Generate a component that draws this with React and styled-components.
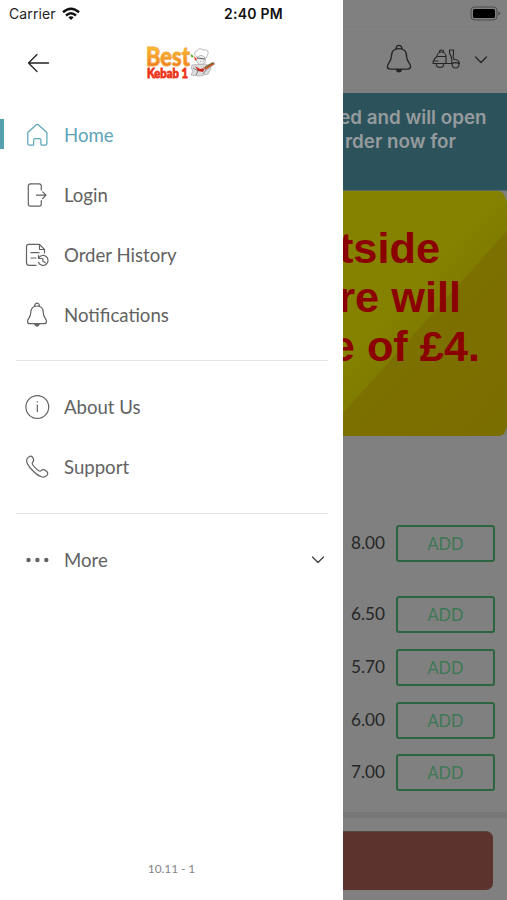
import React from "react";
import styled, { createGlobalStyle } from "styled-components";

const GlobalStyle = createGlobalStyle`
  * { box-sizing: border-box; }
  body { margin: 0; background: #fff; overflow: hidden; }
`;

const Screen = styled.div`
  display: grid;
  grid-template-columns: 343px 164px;
  width: 507px;
  height: 900px;
  overflow: hidden;
  font-family: Lato, sans-serif;
`;

const Drawer = styled.aside`
  display: flex;
  flex-direction: column;
  height: 900px;
  background: #fff;
`;

const StatusBar = styled.div`
  display: flex;
  align-items: center;
  height: 27px;
  padding-left: 9px;
  font-family: Inter, sans-serif;
  font-size: 14px;
  line-height: 27px;
  color: #222;
  white-space: nowrap;
`;

const Carrier = styled.span`
  width: 53px;
  letter-spacing: 0.1px;
`;

const Clock = styled.span`
  margin-left: 144px;
  font-weight: 600;
  font-size: 14px;
  letter-spacing: 0.25px;
  color: #111;
`;

const DrawerHeader = styled.header`
  display: flex;
  align-items: center;
  height: 73px;
  padding: 0 0 1px 27px;
`;

const LogoSvg = styled.svg`
  display: block;
  margin-left: 95px;
`;

const Group = styled.nav`
  padding-top: ${(p) => p.$top}px;
`;

const Item = styled.a`
  display: flex;
  align-items: center;
  height: 60px;
  padding-right: 18px;
  color: ${(p) => (p.$active ? "#5ba4b8" : "#626262")};
`;

const Marker = styled.span`
  width: 4px;
  height: 30px;
  margin: 0 20px 2px 0;
  background: ${(p) => (p.$active ? "#559fae" : "transparent")};
`;

const Label = styled.span`
  flex: 1;
  margin-left: 13px;
  font-size: 18.6px;
  line-height: 24px;
  white-space: nowrap;
`;

const Icon = styled.svg`
  display: block;
  flex: none;
  fill: none;
  stroke: currentColor;
  stroke-width: ${(p) => p.$weight || 1.2};
  stroke-linecap: round;
  stroke-linejoin: round;
`;

const Divider = styled.hr`
  width: 312px;
  height: 1px;
  margin: ${(p) => p.$top}px 0 0 16px;
  border: 0;
  background: #e6e6e6;
`;

const Version = styled.footer`
  margin-top: auto;
  padding-bottom: 22px;
  text-align: center;
  font-size: 12px;
  letter-spacing: -0.1px;
  line-height: 18px;
  color: #858585;
`;

const Page = styled.main`
  display: flex;
  flex-direction: column;
  height: 900px;
  overflow: hidden;
  background: #808080;
  color: #262626;
`;

const BatteryBar = styled.div`
  display: flex;
  justify-content: flex-end;
  align-items: center;
  height: 27px;
  padding-right: 6px;
  border-bottom: 1px solid #7d7d7d;
`;

const Toolbar = styled.div`
  display: flex;
  align-items: center;
  height: 66px;
  padding: 0 0 3px 42px;
`;

const ToolbarIcon = styled(Icon)`
  margin-right: ${(p) => p.$gap}px;
`;

const Notice = styled.section`
  display: flex;
  flex-direction: column;
  align-items: flex-end;
  height: 98px;
  padding-top: 13px;
  border-bottom: 1px solid #58696c;
  background: #2c535c;
  color: #979b9d;
  font-family: Inter, sans-serif;
  font-size: 18.8px;
  font-weight: 600;
  line-height: 23.5px;
`;

const NoticeLine = styled.span`
  margin-right: ${(p) => p.$end}px;
  white-space: nowrap;
`;

const Promo = styled.section`
  display: flex;
  flex-direction: column;
  align-items: flex-end;
  height: 245px;
  padding-top: 33px;
  clip-path: polygon(0 0, 156px 0, 160px 2px, 164px 10px, 164px 236px, 161px 243px, 157px 245px, 0 245px);
  background: linear-gradient(132deg, #858200 0 40%, #807c00 51.8%, #7c7000 52.2%, #7b6e00 100%);
  color: #8b0000;
  font-family: "Liberation Sans", sans-serif;
  font-size: 43.3px;
  font-weight: 700;
  line-height: 49.2px;
`;

const PromoLine = styled.span`
  margin-right: ${(p) => p.$end}px;
  white-space: nowrap;
`;

const Products = styled.section`
  display: flex;
  flex-direction: column;
  padding-top: 89px;
`;

const Product = styled.div`
  display: flex;
  align-items: center;
  justify-content: flex-end;
  height: 37px;
  margin-bottom: ${(p) => p.$gap}px;
  padding-right: 12px;
`;

const Price = styled.span`
  width: 45px;
  padding-bottom: 2px;
  font-size: 17.2px;
  line-height: 22px;
`;

const AddButton = styled.button`
  flex: none;
  width: 99px;
  height: 37px;
  padding: 0;
  border: 2px solid #2c653f;
  border-radius: 3px;
  background: transparent;
  color: #3d7855;
  font: 16.3px Lato, sans-serif;
`;

const Checkout = styled.div`
  flex: 1;
  border-top: 6px solid #777;
  padding-top: 13px;
`;

const CheckoutButton = styled.div`
  width: 149.5px;
  height: 59px;
  border-top: 1px solid #594540;
  border-radius: 0 7px 7px 0;
  background: #5d342d;
`;

const icons = {
  home: <path d="M3.800 10.500 12.300 2.800q1-.8 2 0l8.600 7.700v11q0 1.700-1.700 1.700h-3.300q-1 0-1-1v-4q0-1.500-1.500-1.500h-4.200q-1.500 0-1.500 1.500v4q0 1-1 1H5.500q-1.700 0-1.700-1.700Z" />,
  login: <><path d="M17.3 8V4q0-2.2-2.2-2.2H6.5Q4.3 1.800 4.3 4v18q0 2.200 2.200 2.200h8.600q2.200 0 2.200-2.200v-3.500" /><path d="M12.500 13.200H22M18.700 9.900 22 13.200l-3.300 3.300" /></>,
  history: <><path d="M20.500 11V7.500L15.500 2.300H4.800Q2.500 2.300 2.500 4.600v16q0 2.800 2.800 2.800H12M15.500 2.300V7.500h5M7 10.700h8M7 16h5" /><path d="M14.800 15.800a5 5 0 1 1-.3 4.700M14.500 13.500v3h3M18.800 16.300v2.700l2.500 1.800" /></>,
  bell: <><path d="M10.700 4.500v-1a2.300 2.300 0 0 1 4.600 0v1M13 4C8.500 4 6.700 7.100 6.700 11c0 4.500-3.200 5.400-3.200 8.400 0 1.700 1 2.300 2.500 2.300h14c1.500 0 2.500-.6 2.500-2.300 0-3-3.200-3.900-3.200-8.400C19.300 7.100 17.500 4 13 4Z" /><path d="M10.800 22.200h4.400q-.5 1.900-2.200 1.900t-2.200-1.900Z" fill="currentColor" /></>,
  info: <><circle cx="13.300" cy="13" r="11.400" /><path d="M13.300 11v6.500M13.300 7.700v.3" /></>,
  phone: <path d="M4 3.600c2.400-2.300 3.800-1.800 5 .3 1.400 2.200.7 3.200-.4 4.300-1.200 1.200.1 3.100 2.800 5.700 2.600 2.700 4.500 4 5.700 2.700 1.100-1.100 2.200-1.700 4.700.1 2.300 1.600 2.700 3 .8 5-2.600 2.800-7.300 1.500-13-4.200C3.400 11.800.9 6.600 4 3.600Z" />,
  more: <g fill="currentColor" stroke="none"><circle cx="4.500" cy="13" r="2.200" /><circle cx="13.400" cy="13" r="2.200" /><circle cx="22.300" cy="13" r="2.200" /></g>,
};

function MenuItem({ icon, children, active, end }) {
  return (
    <Item $active={active}>
      <Marker $active={active} />
      <Icon width="27" height="27" viewBox="0 0 27 27">{icons[icon]}</Icon>
      <Label>{children}</Label>
      {end}
    </Item>
  );
}

function Logo() {
  return (
    <LogoSvg width="72" height="42" viewBox="0 0 72 42">
      <defs>
        <linearGradient id="gold" x2="0" y2="1"><stop offset=".2" stopColor="#ffc72c" /><stop offset=".8" stopColor="#f17c22" /></linearGradient>
      </defs>
      <text x="1" y="24" textLength="44" lengthAdjust="spacingAndGlyphs" fontFamily="Lato" fontWeight="900" fontSize="27" fill="url(#gold)" stroke="#f2a943" strokeWidth="1">Best</text>
      <text x="2" y="35.500" textLength="41" lengthAdjust="spacingAndGlyphs" fontFamily="Lato" fontWeight="900" fontSize="12.500" fill="#ed2914" stroke="#ed3920" strokeWidth=".8">Kebab 1</text>
      <g stroke="#aaa" strokeWidth=".8" strokeLinejoin="round">
        <path d="M47 23q-2 4 1 6l-2 4 8 1 9-2 3-6-5-4Z" fill="#ddd" />
        <path d="M52 15q-5-5 0-6 2-4 6-1 6-1 5 4l-2 4Z" fill="#fff" />
        <circle cx="56" cy="18" r="4.500" fill="#eee" />
        <path d="m52 16 8 1M55 19h.5M58 19h.5" stroke="#333" />
        <path d="m50 24 5 3 5-1-2 4-5-1Z" fill="#c92820" stroke="none" />
        <path d="m58 26 10-6 2 2-9 6Z" fill="#c85828" />
        <path d="m60 25 8-4" stroke="#4e6428" />
        <path d="m50 19-1-5 3 3" fill="#e84a26" stroke="none" />
        <path d="m46 13 2 2" stroke="#57ae3a" strokeWidth="2" />
        <path d="m48 26 5 3-2 4M61 28l-3 4" fill="none" stroke="#666" />
      </g>
    </LogoSvg>
  );
}

const prices = [["8.00", 34], ["6.50", 16], ["5.70", 16], ["6.00", 15], ["7.00", 21]];

export default function App() {
  return (
    <Screen>
      <GlobalStyle />
      <Drawer>
        <StatusBar>
          <Carrier>Carrier</Carrier>
          <svg width="18" height="14" viewBox="0 0 18 14" fill="none" stroke="#111" strokeWidth="2.500">
            <path d="M1 5.300q8-7.200 16 0M4 8.500q5-4.400 10 0" />
            <path d="m9 13-2.700-2.700q2.700-2.200 5.400 0Z" fill="#111" stroke="none" />
          </svg>
          <Clock>2:40 PM</Clock>
        </StatusBar>
        <DrawerHeader>
          <Icon $weight={1.3} width="23" height="20" viewBox="0 0 23 20" color="#222"><path d="M21.500 10h-20M10 1.500 1.500 10l8.500 8.500" /></Icon>
          <Logo />
        </DrawerHeader>
        <Group $top={5}>
          <MenuItem icon="home" active>Home</MenuItem>
          <MenuItem icon="login">Login</MenuItem>
          <MenuItem icon="history">Order History</MenuItem>
          <MenuItem icon="bell">Notifications</MenuItem>
        </Group>
        <Divider $top={15} />
        <Group $top={16}>
          <MenuItem icon="info">About Us</MenuItem>
          <MenuItem icon="phone">Support</MenuItem>
        </Group>
        <Divider $top={16} />
        <Group $top={16}>
          <MenuItem icon="more" end={<Icon $weight={1.4} width="14" height="10" viewBox="0 0 14 10" color="#444"><path d="m1.500 2 5.500 5.500L12.500 2" /></Icon>}>More</MenuItem>
        </Group>
        <Version>10.11 - 1</Version>
      </Drawer>

      <Page>
        <BatteryBar>
          <svg width="31" height="15" viewBox="0 0 31 15">
            <rect x="1" y="1" width="26" height="13" rx="3.500" fill="none" stroke="#4b4b4b" />
            <rect x="3" y="3" width="22" height="9" rx="1.500" fill="#000" />
            <path d="M28.500 5.500q3 2 0 4Z" fill="#444" />
          </svg>
        </BatteryBar>
        <Toolbar>
          <ToolbarIcon $gap={19} $weight={1.150} width="28" height="30" viewBox="1.500 0 23 26" preserveAspectRatio="none">{icons.bell}</ToolbarIcon>
          <ToolbarIcon $gap={13} $weight={1.150} width="29" height="22" viewBox="0 0 29 22">
            <path d="M5 8.500a4.500 4.500 0 0 1 9 0ZM7.500 4.500V3q2-2 4 0v1.500M5 8.500Q1.500 11 1 15.500h18q2-1 0-7L17.500 5V2h4v4q-1 2 0 4l.7 1.500q5 0 5 4-4.200-2-7.200.3M1 13h5M14 8.500v7" />
            <path d="M4 15.500q.5 4 4 4t4-4M20 16.500q.5 3.500 3.700 3.500t3.500-4.500" />
          </ToolbarIcon>
          <Icon $weight={1.300} width="14" height="10" viewBox="0 0 14 8"><path d="M1.500 2 7 7.500 12.500 2" /></Icon>
        </Toolbar>
        <Notice>
          <NoticeLine $end={20.5}>ed and will open</NoticeLine>
          <NoticeLine $end={51}>rder now for</NoticeLine>
        </Notice>
        <Promo>
          <PromoLine $end={67}>tside</PromoLine>
          <PromoLine $end={46}>re will</PromoLine>
          <PromoLine $end={27}>e of £4.</PromoLine>
        </Promo>
        <Products>
          {prices.map(([price, gap]) => (
            <Product key={price} $gap={gap}>
              <Price>{price}</Price>
              <AddButton>ADD</AddButton>
            </Product>
          ))}
        </Products>
        <Checkout><CheckoutButton /></Checkout>
      </Page>
    </Screen>
  );
}
